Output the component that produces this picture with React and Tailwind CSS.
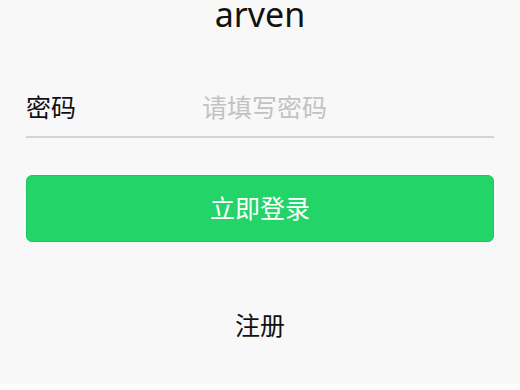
export default function App() {
  return (
    <div
      className="min-h-[390px] w-[520px] bg-[#f8f8f8] text-[#111]"
      style={{ fontFamily: '"Noto Sans", "Noto Sans CJK SC", sans-serif' }}
    >
      <h1 className="-mt-[6px] text-center text-[34px] leading-[40px] font-normal">arven</h1>

      <div className="px-[26px]">
        <div className="mt-[44px] flex h-[60px] items-center border-b-[2px] border-[#d4d4d4]">
          <label className="w-[176px] shrink-0 text-[25px] leading-none">密码</label>
          <input
            type="password"
            placeholder="请填写密码"
            className="min-w-0 flex-1 bg-transparent text-[25px] leading-none outline-none placeholder:text-[#c2c2c2]"
          />
        </div>

        <button
          type="button"
          className="mt-[37px] flex h-[67px] w-full items-center justify-center rounded-[6px] border border-[#1fc563] bg-[#23d469] text-[25px] text-white"
        >
          立即登录
        </button>

        <div className="mt-[65px] text-center text-[25px] leading-[36px]">注册</div>
      </div>
    </div>
  );
}
